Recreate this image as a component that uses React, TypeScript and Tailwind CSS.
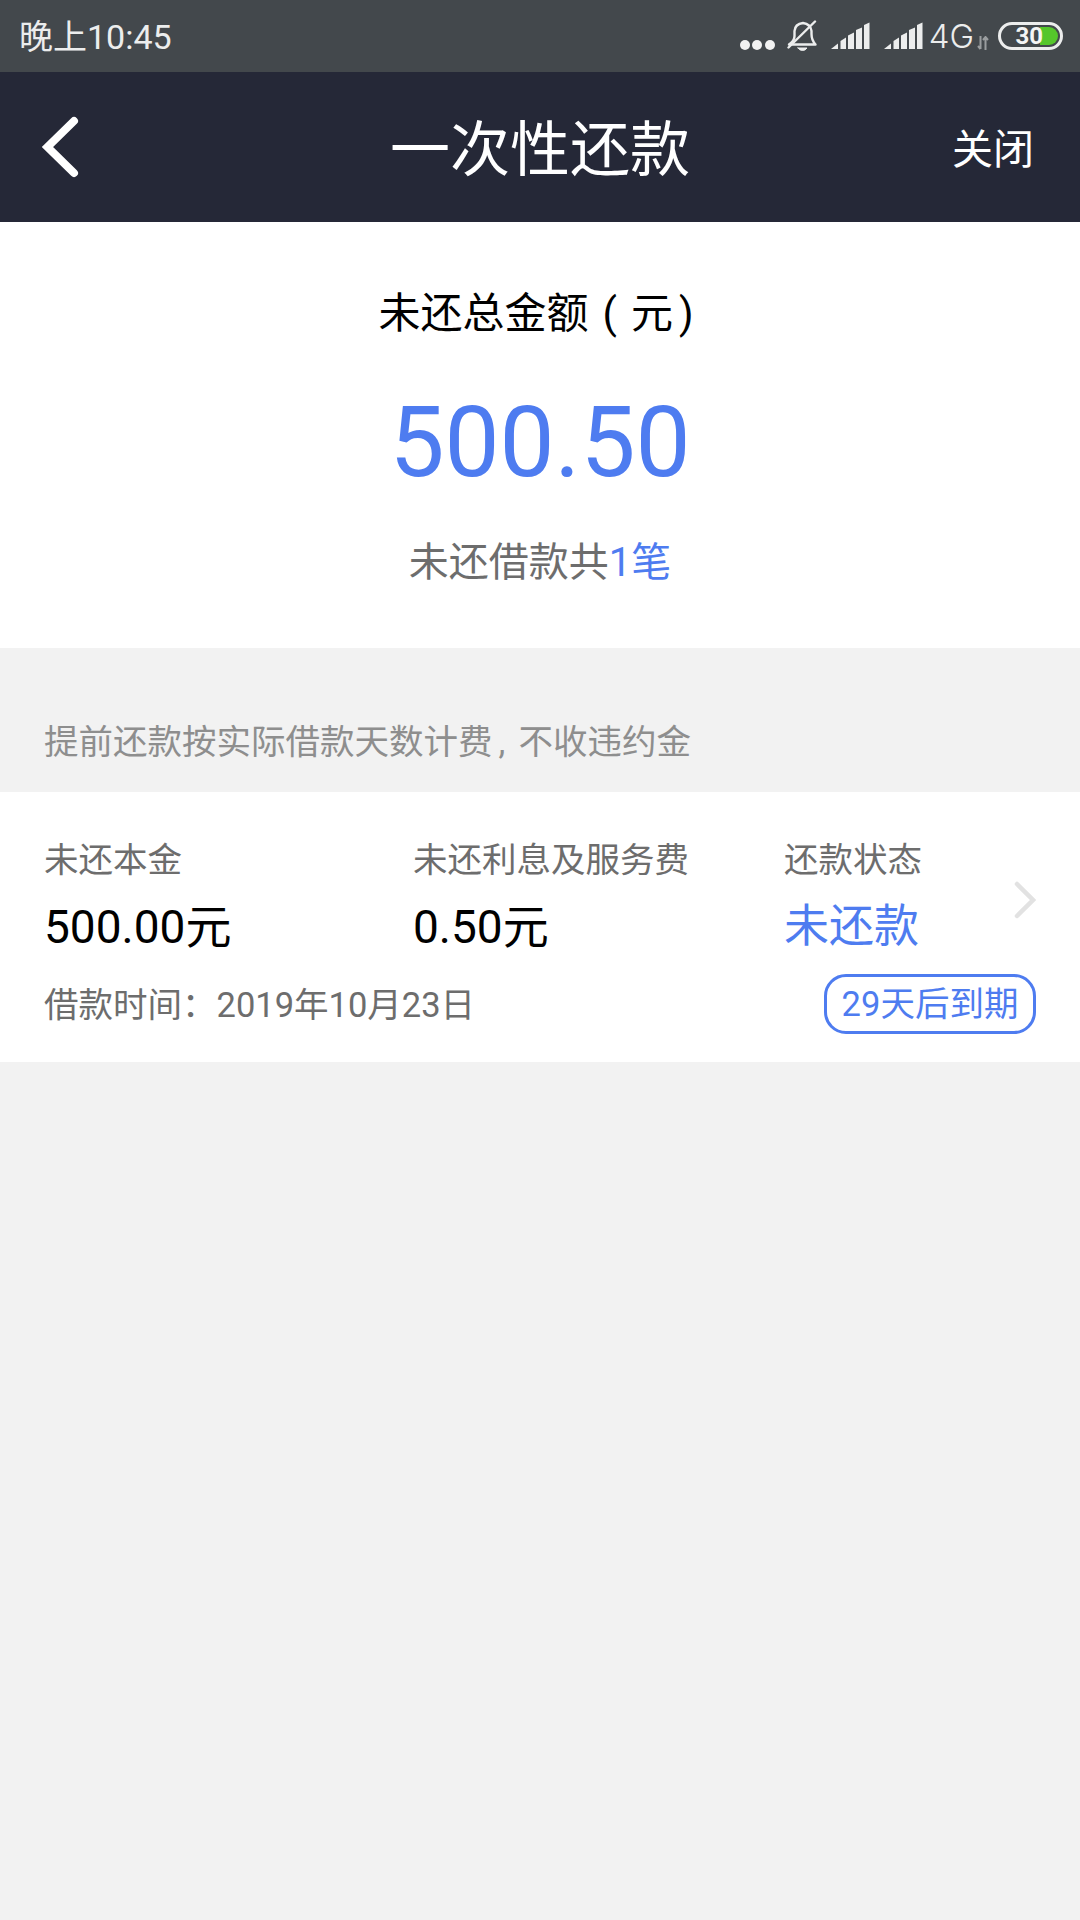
const cjk = { fontFamily: 'Roboto, "Noto Sans CJK SC", sans-serif' };

const SignalBars = () => (
  <svg width="40" height="28" viewBox="0 0 40 28" fill="#eceded">
    <path d="M0 27 L7 21.5 V27 Z" />
    <path d="M9.5 19 L15 15.5 V27 H9.5 Z" />
    <path d="M17 13.5 L23 10.5 V27 H17 Z" />
    <path d="M25 8 L31 5.5 V27 H25 Z" />
    <path d="M33 3 L38.5 0.5 V27 H33 Z" />
  </svg>
);

const StatusBar = () => (
  <div className="h-[72px] bg-[#43484c] flex items-center justify-between pl-[19px] pr-[17px] text-[#eceded]">
    <span className="text-[34px] leading-none mt-[2px]">晚上10:45</span>
    <div className="flex items-center">
      <div className="flex gap-[2.5px] mt-[18px]">
        <span className="w-[10px] h-[10px] rounded-full bg-[#f2f2f2]" />
        <span className="w-[10px] h-[10px] rounded-full bg-[#f2f2f2]" />
        <span className="w-[10px] h-[10px] rounded-full bg-[#f2f2f2]" />
      </div>
      <svg className="ml-[12px]" width="30" height="32" viewBox="0 0 30 32" fill="none" stroke="#eceded" strokeWidth="2.4" strokeLinecap="round" strokeLinejoin="round">
        <path d="M2 24.5 H28.5 Q24.5 20 24.5 14 V11 Q23.5 4 16 3 Q8 4 7.5 11 V16 Q7.5 21 2 24.5" />
        <path d="M11 28 H20 Q18.5 30.5 15.5 30.5 Q12.5 30.5 11 28 Z" fill="#eceded" strokeWidth="1" />
        <path d="M1.5 27.5 L28 1.5" />
      </svg>
      <div className="ml-[14px]"><SignalBars /></div>
      <div className="ml-[13px]"><SignalBars /></div>
      <span className="ml-[5px] text-[33px] leading-none font-light" style={{ fontFamily: 'Inter, sans-serif' }}>4G</span>
      <svg className="ml-[3px] mt-[13px]" width="12" height="14" viewBox="0 0 12 14" stroke="#9a9d9f" strokeWidth="2" fill="none">
        <path d="M3.5 0 V13 M1 10 L3.5 13 M8.5 14 V1 M6 4 L8.5 1 L11 4" />
      </svg>
      <div className="relative ml-[9px] w-[65px] h-[28px] rounded-full border-[3px] border-[#eceded] flex items-center justify-end pr-[17px]">
        <span className="absolute right-[2px] top-[2px] w-[18px] h-[18px] rounded-r-full bg-[#55c62b]" />
        <span className="relative text-[24px] font-bold leading-none text-[#f4f4f4]">30</span>
      </div>
    </div>
  </div>
);

export default function App() {
  return (
    <div className="w-[1080px] h-[1920px] bg-[#f2f2f2] flex flex-col" style={cjk}>
      <StatusBar />
      <div className="h-[150px] bg-[#252837] flex items-center justify-between pl-[38px] pr-[46px] relative">
        <svg width="42" height="64" viewBox="0 0 42 64" fill="none" stroke="#fff" strokeWidth="8" strokeLinecap="round" strokeLinejoin="miter">
          <path d="M36 6 L9.5 32 L36 58" />
        </svg>
        <span className="text-white text-[41px] leading-none mt-[6px]">关闭</span>
        <span className="absolute inset-x-0 text-center text-white text-[60px] leading-none mt-[7px]">一次性还款</span>
      </div>
      <div className="h-[426px] bg-white flex flex-col items-center">
        <span className="mt-[68px] flex text-[42px] leading-[48px] text-black">
          未还总金额<span className="ml-[14px]">(</span><span className="ml-[14px]">元</span><span className="ml-[6px] mr-[8px]">)</span>
        </span>
        <span className="mt-[49px] text-[98px] leading-[112px] text-[#4e7cf0]">500.50</span>
        <span className="mt-[40px] text-[40px] leading-[48px] text-[#6d6d6d]">
          未还借款共<span className="text-[#4e7cf0]">1笔</span>
        </span>
      </div>
      <div className="h-[144px] flex items-end pl-[44px] pb-[28px] text-[34.5px] leading-[44px] text-[#8e8e8e]">
        提前还款按实际借款天数计费<span className="w-[26px] pl-[6px]">,</span>不收违约金
      </div>
      <div className="h-[270px] bg-white px-[44px] pt-[46px]">
        <div className="flex">
          <div className="w-[369px] flex flex-col">
            <span className="text-[34.5px] leading-[44px] text-[#6d6d6d]">未还本金</span>
            <span className="mt-[15px] text-[46px] leading-[60px] text-black">500.00元</span>
          </div>
          <div className="w-[371px] flex flex-col">
            <span className="text-[34.5px] leading-[44px] text-[#6d6d6d]">未还利息及服务费</span>
            <span className="mt-[15px] text-[46px] leading-[60px] text-black">0.50元</span>
          </div>
          <div className="flex-1 flex flex-col">
            <span className="text-[34.5px] leading-[44px] text-[#6d6d6d]">还款状态</span>
            <span className="mt-[15px] text-[45px] leading-[60px] text-[#4e7cf0]">未还款</span>
          </div>
          <svg className="mt-[42px]" width="22" height="40" viewBox="0 0 22 40" fill="none" stroke="#e2e2e2" strokeWidth="4.5" strokeLinecap="round">
            <path d="M3 4 L19 20 L3 36" />
          </svg>
        </div>
        <div className="mt-[17px] flex items-center justify-between">
          <span className="mt-[2px] text-[34.5px] leading-[44px] text-[#6d6d6d]">借款时间：2019年10月23日</span>
          <span className="h-[60px] w-[212px] rounded-[22px] border-[3px] border-[#4e7cf0] flex items-center justify-center text-[34.5px] leading-none text-[#4e7cf0]">29天后到期</span>
        </div>
      </div>
    </div>
  );
}
